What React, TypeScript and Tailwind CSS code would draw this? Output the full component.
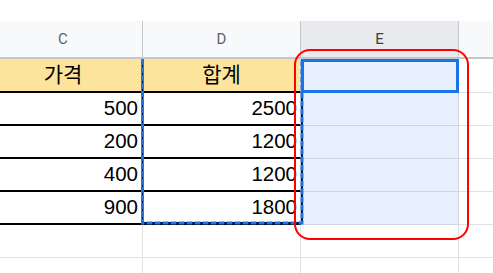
import type React from 'react'

const rows: { c: string; d: string }[] = [
  { c: '500', d: '2500' },
  { c: '200', d: '1200' },
  { c: '400', d: '1200' },
  { c: '900', d: '1800' }
]

const cellFont = { fontFamily: '"Liberation Sans", Arial, sans-serif' }
const krFont = { fontFamily: '"Liberation Sans", "Noto Sans CJK KR", sans-serif' }

// C열은 화면 왼쪽 밖으로 일부 잘려 있음
const colC = '-ml-[16px] w-[159px] shrink-0'

export default function App(): React.JSX.Element {
  return (
    <div className="relative h-[273px] w-[493px] overflow-hidden bg-white">
      <div className="h-[21px]" />

      {/* 열 머리글 */}
      <div
        className="flex h-[38px] border-b-2 border-[#c7c7c7] text-[15px]"
        style={{ fontFamily: 'Roboto, sans-serif' }}
      >
        <Head label="C" w={colC} />
        <Head label="D" w="w-[158px]" />
        <Head label="E" w="w-[158px]" active />
        <div className="flex-1 bg-[#f8f9fa]" />
      </div>

      {/* 1행: 제목 */}
      <div className="flex h-[34px] text-[21px] text-black" style={krFont}>
        <div className={`flex ${colC} items-center justify-center border-b-2 border-r border-black border-r-[#e1e1e1] bg-[#fde49c]`}>
          가격
        </div>
        <div className="flex w-[158px] items-center justify-center border-b-2 border-r border-black border-r-[#e1e1e1] bg-[#fde49c]">
          합계
        </div>
        <div className="w-[158px] border-b border-r border-[#cfd6e2] bg-[#e8f0fd]" />
        <div className="flex-1 border-b border-[#e1e1e1]" />
      </div>

      {rows.map((r, i) => (
        <div key={i} className="flex h-[33px] text-[20.5px] text-black" style={cellFont}>
          <div className={`flex ${colC} items-center justify-end border-b-2 border-r border-black border-r-[#e1e1e1] pr-[4px]`}>
            {r.c}
          </div>
          <div className="flex w-[158px] items-center justify-end border-b-2 border-r border-black border-r-[#e1e1e1] pr-[3px]">
            {r.d}
          </div>
          <div className="w-[158px] border-b border-r border-[#cfd6e2] bg-[#e8f0fd]" />
          <div className="flex-1 border-b border-[#e1e1e1]" />
        </div>
      ))}

      {[0, 1].map((i) => (
        <div key={i} className="flex h-[33px]">
          <div className={`${colC} border-b border-r border-[#e1e1e1]`} />
          <div className="w-[158px] border-b border-r border-[#e1e1e1]" />
          <div className="w-[158px] border-b border-r border-[#e1e1e1]" />
          <div className="flex-1 border-b border-[#e1e1e1]" />
        </div>
      ))}

      {/* 복사 범위 (점선) */}
      <svg className="pointer-events-none absolute left-[140px] top-[59px]" width="165" height="168">
        <path d="M2.5 0 V164 H162 V0" fill="none" stroke="#000" strokeWidth="2" />
        <path
          d="M2.5 0 V164 H162 V0"
          fill="none"
          stroke="#1a73e8"
          strokeWidth="3"
          strokeDasharray="6 2"
        />
      </svg>

      {/* 활성 셀 */}
      <div className="pointer-events-none absolute left-[301px] top-[59px] h-[34px] w-[158px] border-[3px] border-[#1a73e8]" />

      {/* 빨간 강조 */}
      <div className="pointer-events-none absolute left-[294px] top-[49px] h-[191px] w-[175px] rounded-[16px] border-2 border-[#ff0000]" />
    </div>
  )
}

function Head({ label, w, active }: { label: string; w: string; active?: boolean }): React.JSX.Element {
  return (
    <div
      className={
        active
          ? `flex ${w} items-center justify-center border-r border-[#c7c7c7] bg-[#e8eaed] text-[#3c4043]`
          : `flex ${w} items-center justify-center border-r border-[#c7c7c7] bg-[#f8f9fa] text-[#5f6368]`
      }
    >
      {label}
    </div>
  )
}
